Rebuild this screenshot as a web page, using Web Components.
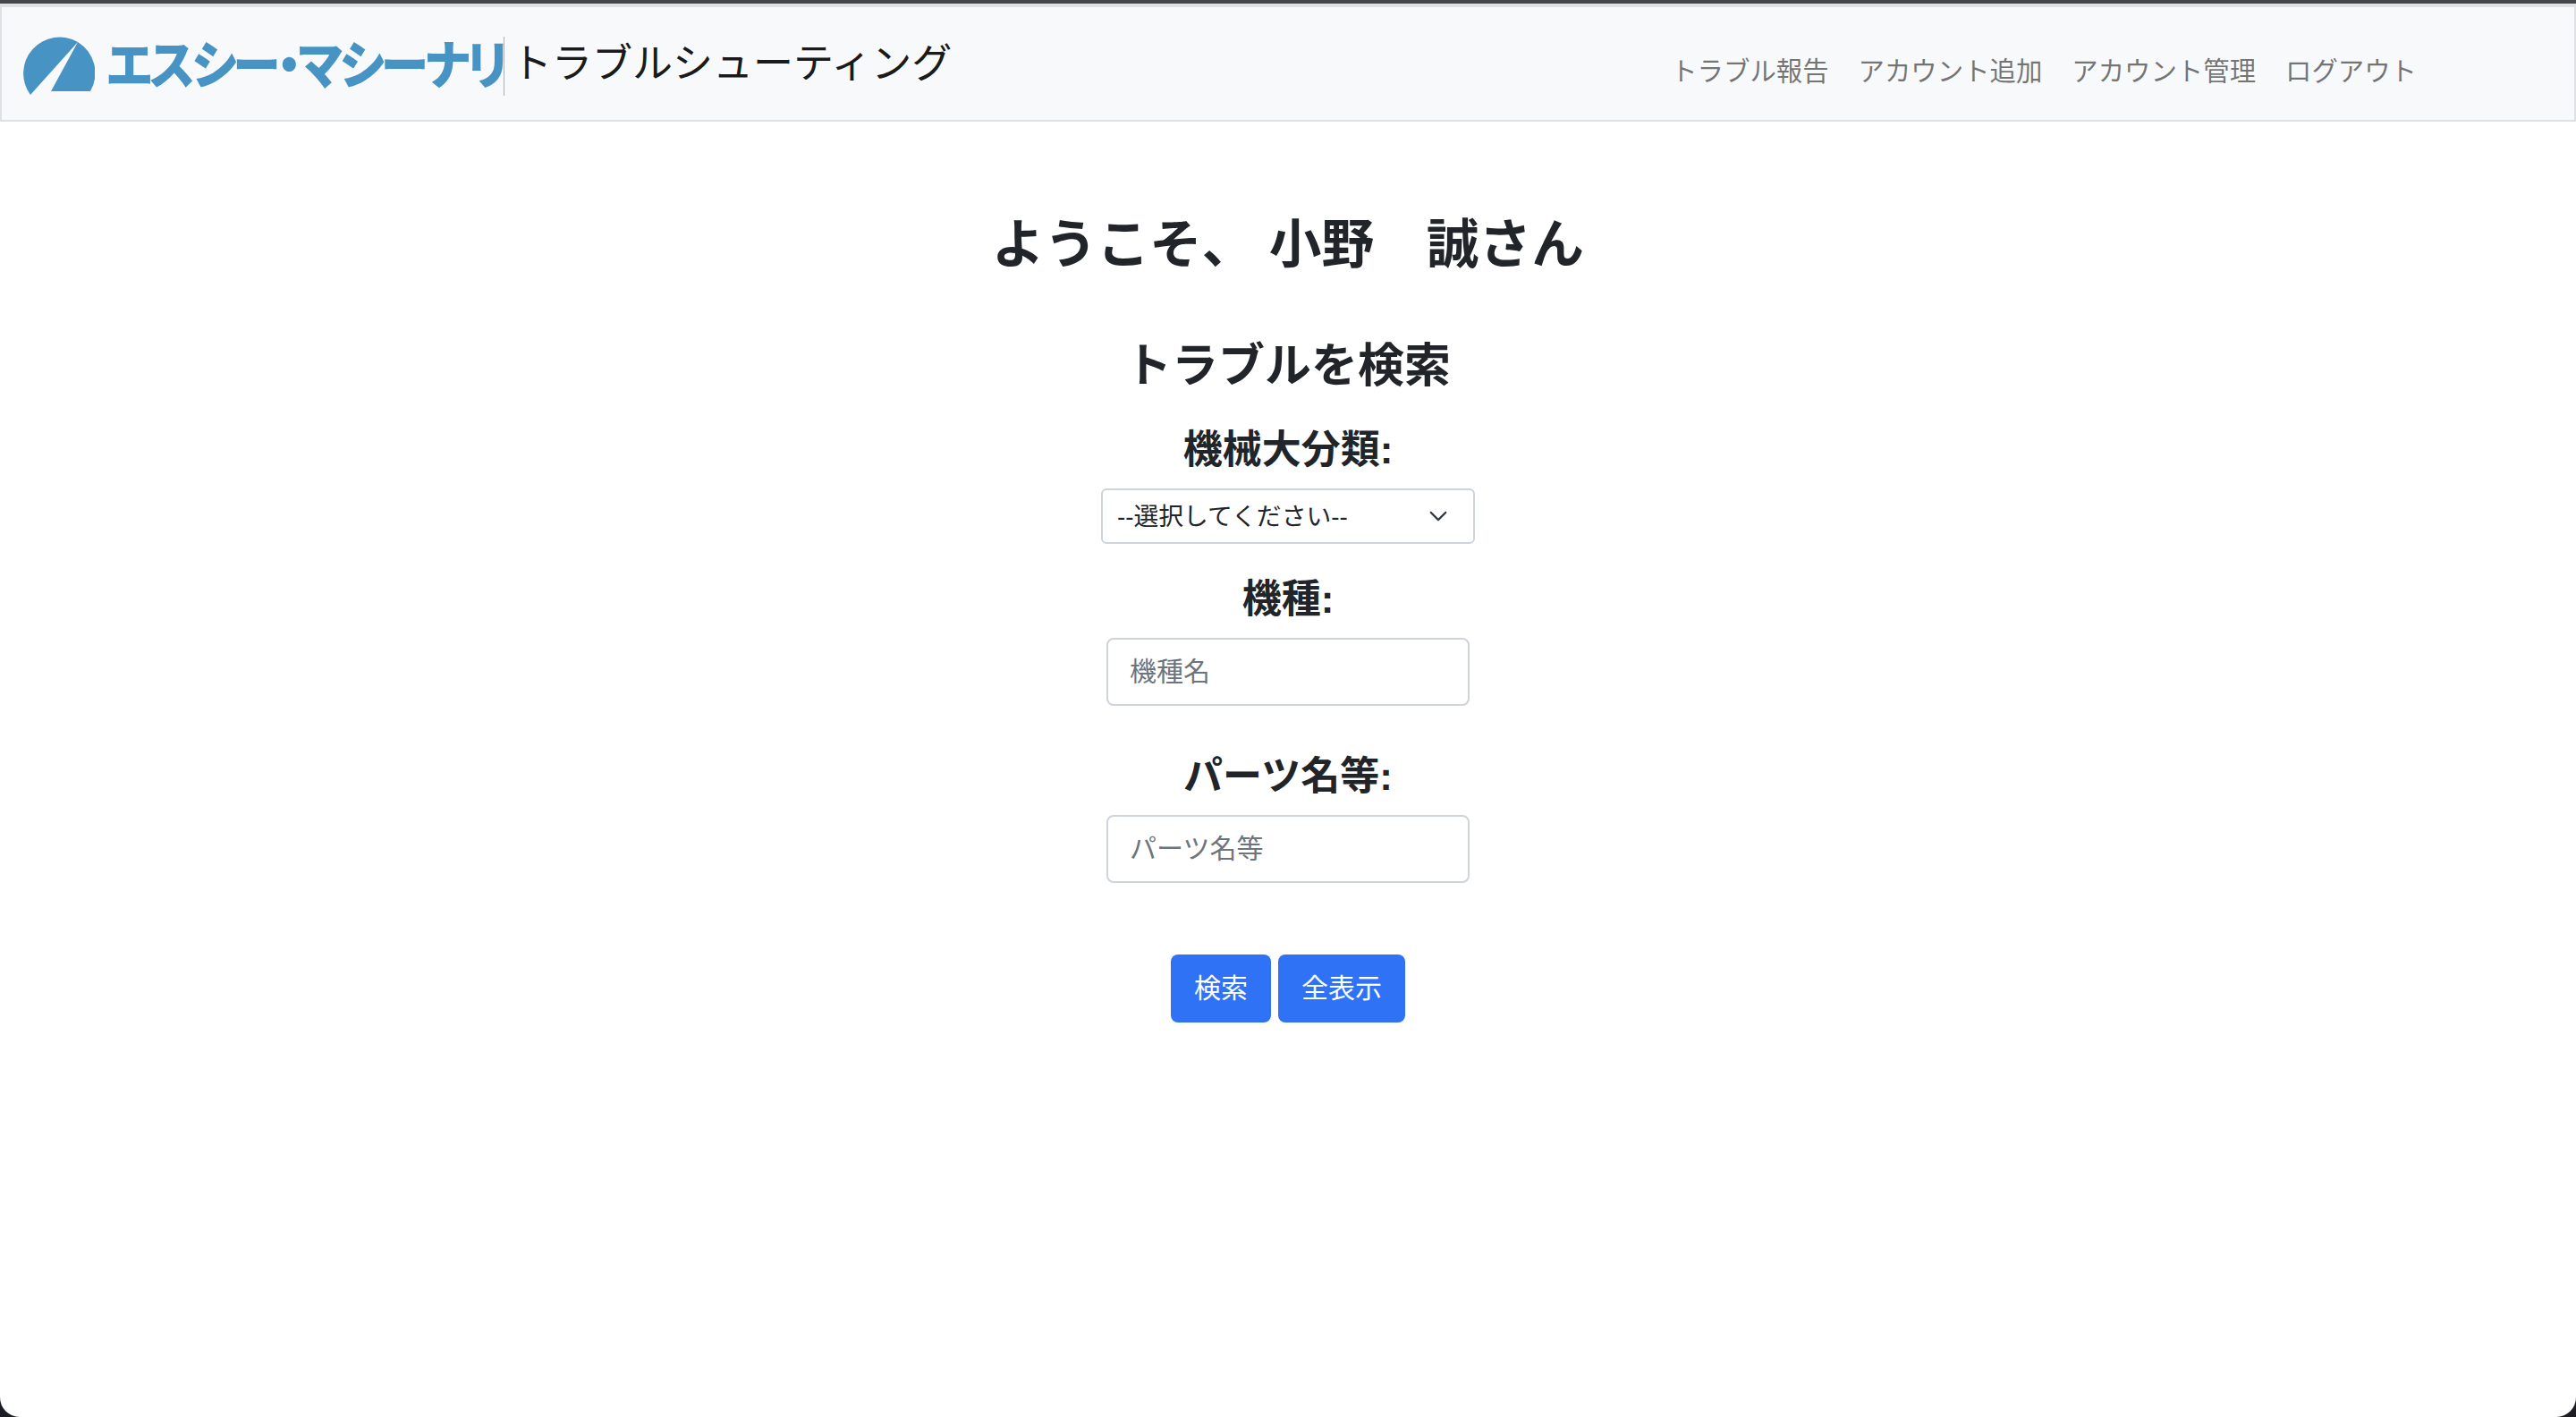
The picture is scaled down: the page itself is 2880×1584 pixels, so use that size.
<!DOCTYPE html>
<html lang="ja">
<head>
<meta charset="utf-8">
<title>トラブルシューティング</title>
<style>
  html { background: #1c1c24; }
  body {
    margin: 0;
    height: 1584px;
    overflow: hidden;
    font-family: "Liberation Sans", "Noto Sans CJK JP", sans-serif;
    color: #212529;
  }
</style>
</head>
<body>
<app-shell>
  <top-nav slot="nav" brand="トラブルシューティング">
    <nav-item>トラブル報告</nav-item>
    <nav-item>アカウント追加</nav-item>
    <nav-item>アカウント管理</nav-item>
    <nav-item>ログアウト</nav-item>
  </top-nav>
  <search-page greeting="ようこそ、 小野　誠さん" heading="トラブルを検索"></search-page>
</app-shell>

<script>
// Page frame: dark window strip on top, rounded white page below
class AppShell extends HTMLElement {
  constructor() {
    super();
    this.attachShadow({ mode: 'open' });
    this.shadowRoot.innerHTML = `
      <style>
        :host { display: flex; flex-direction: column; height: 1584px; }
        .strip { height: 4px; background: #44464c; flex: none; }
        .page {
          flex: 1;
          display: flex;
          flex-direction: column;
          background: #fff;
          border-radius: 0 0 22px 22px;
        }
      </style>
      <div class="strip"></div>
      <div class="page">
        <slot name="nav"></slot>
        <slot></slot>
      </div>`;
  }
}

class NavItem extends HTMLElement {
  constructor() {
    super();
    this.attachShadow({ mode: 'open' });
    this.shadowRoot.innerHTML = `
      <style>
        :host { display: block; font-size: 29.4px; line-height: 44px; color: rgba(0, 0, 0, 0.55); white-space: nowrap; }
      </style>
      <slot></slot>`;
  }
}

class TopNav extends HTMLElement {
  constructor() {
    super();
    this.attachShadow({ mode: 'open' });
    this.shadowRoot.innerHTML = `
      <style>
        :host {
          display: flex;
          align-items: flex-start;
          height: 132px;
          box-sizing: border-box;
          background: #f8f9fa;
          border: 2px solid #dee2e6;
          border-top-width: 4px;
        }
        .logo {
          display: flex;
          align-items: flex-start;
          margin: 33px 0 0 23px;
          height: 66px;
          width: 538px;
          border-right: 1px solid #9fb4c2;
        }
        .logo svg { width: 81px; height: 66px; flex: none; fill: #4794c4; }
        /* the logo wordmark is condensed, so squeeze it rather than overlap glyphs */
        .logo span {
          font-size: 58px;
          line-height: 66px;
          font-weight: 900;
          color: #4794c4;
          font-feature-settings: "palt";
          letter-spacing: -3.5px;
          margin-left: 13px;
          white-space: nowrap;
          transform: scaleX(0.925);
          transform-origin: left center;
        }
        .brand { font-size: 45px; line-height: 60px; margin: 34px 0 0 8px; color: #1a1a1a; white-space: nowrap; }
        .links { display: flex; gap: 33px; margin: 50px 176px 0 auto; }
      </style>
      <div class="logo">
        <svg viewBox="26 41 81 66">
          <path d="M88 47 L35 106 A40.5 40.5 0 0 1 88 47 Z"/>
          <path d="M88 47 L58 102 L102 102 A40.5 40.5 0 0 0 88 47 Z"/>
        </svg>
        <span>エスシー・マシーナリ</span>
      </div>
      <div class="brand"></div>
      <div class="links"><slot></slot></div>`;
    this.shadowRoot.querySelector('.brand').textContent = this.getAttribute('brand');
  }
}

class SelectField extends HTMLElement {
  constructor() {
    super();
    this.attachShadow({ mode: 'open' });
    this.shadowRoot.innerHTML = `
      <style>
        :host { display: flex; flex-direction: column; align-items: center; }
        label { font-size: 44px; line-height: 60px; font-weight: 700; margin-bottom: 13px; }
        .box { position: relative; width: 418px; height: 62px; }
        select {
          appearance: none;
          width: 100%;
          height: 100%;
          box-sizing: border-box;
          padding: 0 16px;
          background: #fff;
          border: 2px solid #ced4da;
          border-radius: 6px;
          font: 27.8px "Liberation Sans", "Noto Sans CJK JP", sans-serif;
          color: #212529;
        }
        svg { position: absolute; right: 30px; top: 20px; width: 22px; height: 22px; pointer-events: none; }
      </style>
      <label></label>
      <div class="box">
        <select><option></option></select>
        <svg viewBox="0 0 16 16" fill="none" stroke="#343a40" stroke-linecap="round" stroke-linejoin="round" stroke-width="1.6"><path d="m2 5 6 6 6-6"/></svg>
      </div>`;
    this.shadowRoot.querySelector('label').textContent = this.getAttribute('label');
    this.shadowRoot.querySelector('option').textContent = this.getAttribute('value');
  }
}

class InputField extends HTMLElement {
  constructor() {
    super();
    this.attachShadow({ mode: 'open' });
    this.shadowRoot.innerHTML = `
      <style>
        :host { display: flex; flex-direction: column; align-items: center; }
        label { font-size: 44px; line-height: 60px; font-weight: 700; margin-bottom: 13px; }
        input {
          width: 406px;
          height: 76px;
          box-sizing: border-box;
          padding: 0 24px;
          border: 2px solid #ced4da;
          border-radius: 8px;
          background: #fff;
          font: 30px "Liberation Sans", "Noto Sans CJK JP", sans-serif;
          color: #212529;
        }
        input::placeholder { color: #6c757d; opacity: 1; }
      </style>
      <label></label>
      <input type="text">`;
    this.shadowRoot.querySelector('label').textContent = this.getAttribute('label');
    this.shadowRoot.querySelector('input').placeholder = this.getAttribute('placeholder');
  }
}

class BlueButton extends HTMLElement {
  constructor() {
    super();
    this.attachShadow({ mode: 'open' });
    this.shadowRoot.innerHTML = `
      <style>
        :host {
          display: block;
          padding: 0 26px;
          height: 76px;
          line-height: 76px;
          font-size: 30px;
          color: #fff;
          background: #2f72f5;
          border-radius: 8px;
          white-space: nowrap;
        }
      </style>
      <slot></slot>`;
  }
}

class SearchPage extends HTMLElement {
  constructor() {
    super();
    this.attachShadow({ mode: 'open' });
    this.shadowRoot.innerHTML = `
      <style>
        :host { display: flex; flex-direction: column; align-items: center; }
        h1 { font-size: 58.7px; line-height: 80px; font-weight: 700; margin: 98px 0 0; }
        h2 { font-size: 52px; line-height: 70px; font-weight: 700; margin: 60px 0 0; }
        select-field { margin-top: 29px; }
        .model { margin-top: 32px; }
        .parts { margin-top: 49px; }
        .buttons { display: flex; gap: 8px; margin-top: 80px; }
      </style>
      <h1></h1>
      <h2></h2>
      <select-field label="機械大分類:" value="--選択してください--"></select-field>
      <input-field class="model" label="機種:" placeholder="機種名"></input-field>
      <input-field class="parts" label="パーツ名等:" placeholder="パーツ名等"></input-field>
      <div class="buttons">
        <blue-button>検索</blue-button>
        <blue-button>全表示</blue-button>
      </div>`;
    this.shadowRoot.querySelector('h1').textContent = this.getAttribute('greeting');
    this.shadowRoot.querySelector('h2').textContent = this.getAttribute('heading');
  }
}

customElements.define('app-shell', AppShell);
customElements.define('nav-item', NavItem);
customElements.define('top-nav', TopNav);
customElements.define('select-field', SelectField);
customElements.define('input-field', InputField);
customElements.define('blue-button', BlueButton);
customElements.define('search-page', SearchPage);
</script>
</body>
</html>
